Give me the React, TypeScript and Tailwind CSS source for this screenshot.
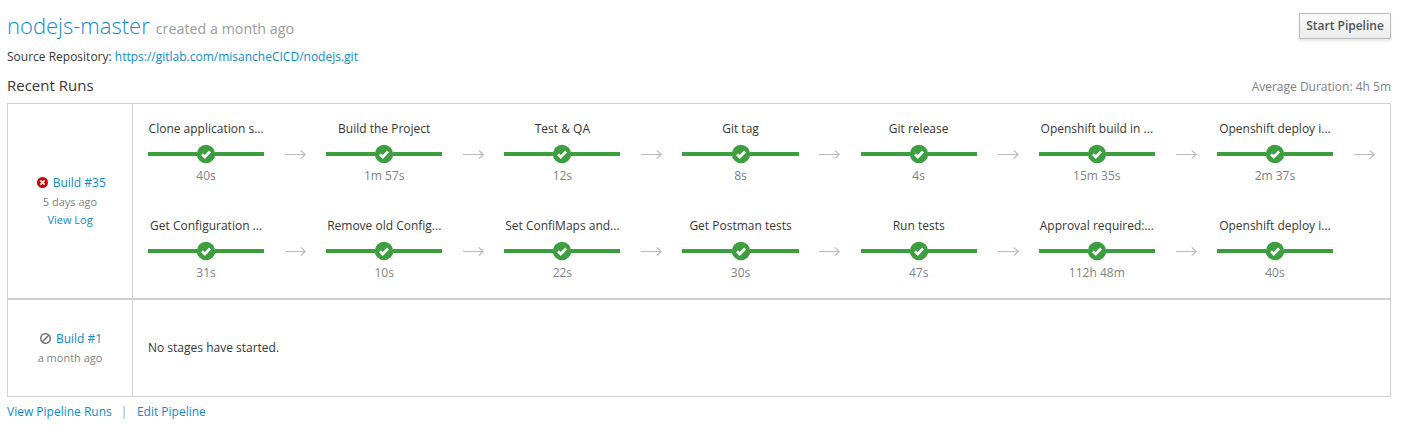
type Stage = { name: string; time: string };

const stages: Stage[] = [
  { name: "Clone application s...", time: "40s" },
  { name: "Build the Project", time: "1m 57s" },
  { name: "Test & QA", time: "12s" },
  { name: "Git tag", time: "8s" },
  { name: "Git release", time: "4s" },
  { name: "Openshift build in ...", time: "15m 35s" },
  { name: "Openshift deploy i...", time: "2m 37s" },
  { name: "Get Configuration ...", time: "31s" },
  { name: "Remove old Config...", time: "10s" },
  { name: "Set ConfiMaps and...", time: "22s" },
  { name: "Get Postman tests", time: "30s" },
  { name: "Run tests", time: "47s" },
  { name: "Approval required:...", time: "112h 48m" },
  { name: "Openshift deploy i...", time: "40s" },
];

function CheckBadge() {
  return (
    <svg className="h-[18px] w-[18px] shrink-0 overflow-visible" viewBox="0 0 18 18" aria-hidden="true">
      <circle cx="9" cy="9" r="9.2" fill="#3c9e3f" />
      <path d="M5 9.2 7.8 12 13.1 6.5" fill="none" stroke="#fff" strokeWidth="2.7" />
    </svg>
  );
}

function Arrow() {
  return (
    <svg className="mt-[28px] ml-[20.8px] h-3 w-[22px] shrink-0" viewBox="0 0 22 12" fill="none" stroke="#bbb" strokeWidth="1.15" aria-hidden="true">
      <path d="M0 6.5H20.5M15.8 2.3 20.2 6.5 15.8 10.7" />
    </svg>
  );
}

function StageCell({ stage, last }: { stage: Stage; last: boolean }) {
  return (
    <div className="flex h-[97px] pt-4">
      <div className="w-[116.2px] shrink-0 text-center">
        <div className="h-[17px] whitespace-nowrap leading-[17px]">{stage.name}</div>
        <div className="mt-2 flex h-[18px] items-center">
          <div className="h-1 flex-1 bg-[#3c9e3f]" />
          <CheckBadge />
          <div className="h-1 flex-1 bg-[#3c9e3f]" />
        </div>
        <div className="mt-1 leading-[17px] text-[#808284]">{stage.time}</div>
      </div>
      {!last && <Arrow />}
    </div>
  );
}

function FailedIcon() {
  return (
    <svg className="h-[11px] w-[11px]" viewBox="0 0 11 11" aria-hidden="true">
      <circle cx="5.5" cy="5.5" r="5.5" fill="#c00" />
      <path d="M3.4 3.4 7.6 7.6M7.6 3.4 3.4 7.6" stroke="#fff" strokeWidth="1.8" />
    </svg>
  );
}

function CancelledIcon() {
  return (
    <svg className="h-[11px] w-[11px]" viewBox="0 0 11 11" fill="none" stroke="#72767b" strokeWidth="1.6" aria-hidden="true">
      <circle cx="5.5" cy="5.5" r="4.7" />
      <path d="M2.3 8.7 8.7 2.3" />
    </svg>
  );
}

export default function App() {
  return (
    <div className="h-[430px] bg-white pr-[14px] pl-[7px] font-['Open_Sans',sans-serif] text-[12px] text-[#363636]">
      <header className="flex h-[46px] justify-between pt-[13px]">
        <h1 className="-mt-px flex h-[26px] items-baseline whitespace-nowrap leading-[26px]">
          <a className="text-[22px] font-light text-[#0d8bd0]">nodejs-master</a>
          <span className="ml-[6px] text-[14.3px] text-[#9c9c9c]">created a month ago</span>
        </h1>
        <button className="h-[26px] w-[92px] border border-[#bbb] bg-gradient-to-b from-[#fafafa] to-[#ededed] text-[12px] font-semibold leading-none text-[#4d5258] shadow-[0_2px_3px_rgba(3,3,3,0.1)]">
          Start Pipeline
        </button>
      </header>
      <div className="h-[30px] pt-[2px] leading-[17px]">
        Source Repository: <a className="text-[#0d8bd0]">https://gitlab.com/misancheCICD/nodejs.git</a>
      </div>
      <div className="flex h-[27px] justify-between">
        <h2 className="-mt-px text-[15px] leading-5">Recent Runs</h2>
        <span className="leading-[22px] text-[#808284]">Average Duration: 4h 5m</span>
      </div>
      <section className="border border-[#d1d1d1]">
        <div className="flex h-[196px] border-b-2 border-[#d1d1d1]">
          <div className="flex w-[125px] shrink-0 flex-col items-center border-r border-[#d1d1d1] pt-[70px]">
            <div className="flex h-[17px] items-center gap-[5px] pl-[2.5px]">
              <FailedIcon />
              <a className="text-[#0d8bd0]">Build #35</a>
            </div>
            <span className="mt-[2px] text-[11px] leading-[17px] text-[#808284]">5 days ago</span>
            <a className="mt-px text-[11px] leading-[17px] text-[#0d8bd0]">View Log</a>
          </div>
          <div className="grid auto-rows-[97px] grid-cols-[repeat(7,178.15px)] content-start pl-[15px]">
            {stages.map((stage, i) => (
              <StageCell key={i} stage={stage} last={i === stages.length - 1} />
            ))}
          </div>
        </div>
        <div className="flex h-[96px]">
          <div className="flex w-[125px] shrink-0 flex-col items-center border-r border-[#d1d1d1] pt-[30px]">
            <div className="flex h-[17px] items-center gap-[5px] pl-[2px]">
              <CancelledIcon />
              <a className="text-[#0d8bd0]">Build #1</a>
            </div>
            <span className="mt-[2px] text-[11px] leading-[17px] text-[#808284]">a month ago</span>
          </div>
          <div className="flex items-center pl-[15px]">No stages have started.</div>
        </div>
      </section>
      <footer className="flex pt-[6px] leading-[17px]">
        <a className="text-[#0d8bd0]">View Pipeline Runs</a>
        <span className="mr-[9.5px] ml-[9px] text-[#9c9c9c]">|</span>
        <a className="text-[#0d8bd0]">Edit Pipeline</a>
      </footer>
    </div>
  );
}
